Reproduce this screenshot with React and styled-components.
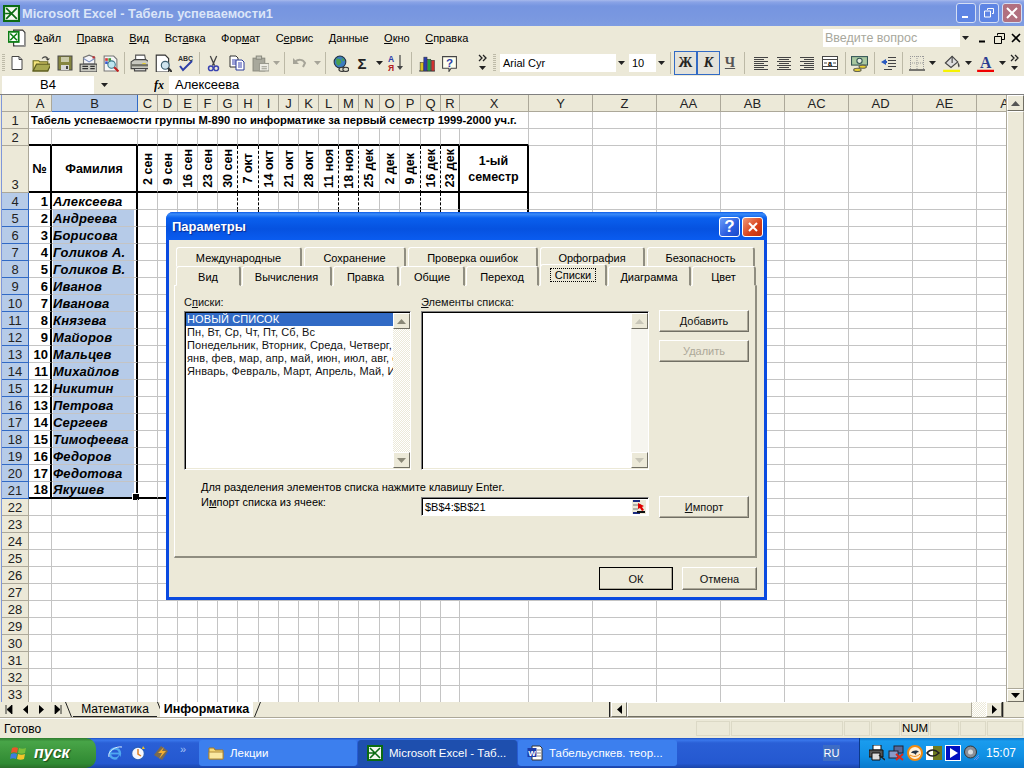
import React from "react";
import styled, { createGlobalStyle } from "styled-components";

const GlobalStyle = createGlobalStyle`
    html, body {
        margin: 0;
        padding: 0;
        width: 1024px;
        height: 768px;
        overflow: hidden;
        background: #ece9d8;
        font-family: "Liberation Sans", Arial, sans-serif;
    }
    * {
        box-sizing: border-box;
    }
`;

const Ico = ({ s = 16, w, h, vb = "0 0 16 16", children }) => (
    <svg width={w || s} height={h || s} viewBox={vb} style={{ display: "block", flex: "none" }}>
        {children}
    </svg>
);

const ExcelLogo = ({ s = 17 }) => (
    <Ico s={s}>
        <rect x="0" y="0" width="16" height="16" fill="#0b6b12" />
        <rect x="2" y="2" width="12" height="12" fill="#f4f8f0" />
        <path d="M3 3l10 10M13 3L3 13M2 8h5" stroke="#0b6b12" strokeWidth="1.6" fill="none" />
    </Ico>
);
const DocExcel = () => (
    <Ico s={18}>
        <path d="M5 1h8l2 2v12H5z" fill="#fff" stroke="#333" />
        <path d="M15 4v11H6" stroke="#999" fill="none" />
        <rect x="0.5" y="2.5" width="9" height="9" fill="#fff" stroke="#0b7d14" strokeWidth="1.6" />
        <path d="M2 4l6 6M8 4l-6 6" stroke="#0b7d14" strokeWidth="1.4" />
    </Ico>
);
const NewIcon = () => (
    <Ico>
        <path d="M3 1.5h7l3 3v10H3z" fill="#fff" stroke="#444" />
        <path d="M10 1.5v3h3" fill="none" stroke="#444" />
    </Ico>
);
const OpenIcon = () => (
    <Ico s={18}>
        <path d="M1 6h5l1 1h7v8H1z" fill="#f2e27a" stroke="#6b6b20" />
        <path d="M1 15l3-6h13l-3 6z" fill="#a8a850" stroke="#5c5c20" />
        <path d="M9 4c1.500-2 4-2 5 0" stroke="#333" fill="none" />
        <path d="M12 4h4l-2 2z" fill="#333" />
    </Ico>
);
const SaveIcon = () => (
    <Ico>
        <rect x="1" y="1" width="14" height="14" fill="#85853f" stroke="#4a4a4a" />
        <rect x="4" y="2" width="8" height="5" fill="#c9c9a8" />
        <rect x="4" y="10" width="8" height="5" fill="#d8d8d8" />
        <rect x="9" y="11" width="2" height="3" fill="#444" />
    </Ico>
);
const MailIcon = () => (
    <Ico s={18}>
        <path d="M4 7V3l5-2 5 2v6H4z" fill="#f4f4f8" stroke="#777" />
        <path d="M4 4l5 3 5-3" stroke="#7a8fc0" fill="none" />
        <rect x="12" y="2" width="2" height="2" fill="#c03030" />
        <rect x="1" y="9" width="15" height="7" fill="#c8c8c0" stroke="#444" />
        <path d="M3 11h5M3 13h5M10 11h4M10 13h4" stroke="#333" />
    </Ico>
);
const FindIcon = () => (
    <Ico s={17}>
        <path d="M2 1h9l3 3v11H2z" fill="#f6f6f6" stroke="#777" />
        <rect x="3" y="3" width="2.500" height="2.500" fill="#d23a3a" />
        <rect x="6" y="3" width="2.500" height="2.500" fill="#3a9a3a" />
        <rect x="3" y="6" width="2.500" height="2.500" fill="#3a5ad0" />
        <rect x="6" y="6" width="2.500" height="2.500" fill="#e6c020" />
        <circle cx="9" cy="9" r="3.500" fill="#bfe6f0" stroke="#3e7b8c" />
        <path d="M11.500 11.500l4 4" stroke="#c02020" strokeWidth="2" />
    </Ico>
);
const PrintIcon = () => (
    <Ico s={18}>
        <path d="M5 1h8l1 5H5z" fill="#fff" stroke="#555" />
        <path d="M1 7l3-2h10l3 2v6H1z" fill="#c8c8c0" stroke="#444" />
        <rect x="1" y="9" width="16" height="2" fill="#6f6f66" />
        <rect x="11" y="8" width="3" height="1" fill="#e8d030" />
        <path d="M4 13h10v2H4z" fill="#fff" stroke="#444" />
    </Ico>
);
const PreviewIcon = () => (
    <Ico s={18}>
        <path d="M2 1h8l3 3v12H2z" fill="#fff" stroke="#333" />
        <circle cx="10" cy="10" r="3.500" fill="#cfe4ee" stroke="#3c5f70" />
        <path d="M12.500 12.500l4 4" stroke="#333" strokeWidth="2" />
    </Ico>
);
const SpellIcon = () => (
    <Ico s={18} vb="0 0 18 18">
        <text x="1" y="7" fontSize="7" fontWeight="700" fill="#333" fontFamily="Liberation Sans">ABC</text>
        <path d="M3 12l3 4 9-9" stroke="#2e3fa8" strokeWidth="2" fill="none" />
    </Ico>
);
const CutIcon = () => (
    <Ico s={17}>
        <path d="M5 1l4 9M11 1L7 10" stroke="#444" strokeWidth="1.200" />
        <circle cx="5.500" cy="12.500" r="2.200" fill="none" stroke="#3842b0" strokeWidth="1.400" />
        <circle cx="10.500" cy="12.500" r="2.200" fill="none" stroke="#3842b0" strokeWidth="1.400" />
    </Ico>
);
const CopyIcon = () => (
    <Ico>
        <path d="M1 1h6l2 2v9H1z" fill="#fff" stroke="#333" />
        <path d="M3 5h4M3 7h4M3 9h4" stroke="#3842b0" />
        <path d="M7 5h6l2 2v8H7z" fill="#fff" stroke="#2a3a98" />
        <path d="M9 8h4M9 10h4M9 12h4" stroke="#3842b0" />
    </Ico>
);
const PasteIcon = () => (
    <Ico s={17}>
        <rect x="1" y="3" width="11" height="12" fill="#a8a89c" stroke="#8c8c80" />
        <rect x="4" y="1" width="5" height="3" fill="#c4c4b8" stroke="#8c8c80" />
        <rect x="7" y="8" width="9" height="7" fill="#efeee6" stroke="#9a9a8e" />
        <path d="M9 11h5M9 13h5" stroke="#9a9a8e" />
    </Ico>
);
const UndoIcon = () => (
    <Ico>
        <path d="M3 7c3-3 8-3 10 1l-2 4" fill="none" stroke="#a6a498" strokeWidth="2" />
        <path d="M1 3v6h6z" fill="#a6a498" />
    </Ico>
);
const WebIcon = () => (
    <Ico s={17}>
        <circle cx="7.500" cy="6.500" r="5.500" fill="#3a7cc0" stroke="#234" />
        <path d="M4 3l4 1 1 3-3 3-2-2zM9 2l3 3-2 1z" fill="#4aa050" />
        <ellipse cx="9.500" cy="13.500" rx="3" ry="2" fill="#d8d8c8" stroke="#333" />
        <ellipse cx="13" cy="13.500" rx="2.800" ry="2" fill="#d8d8c8" stroke="#333" />
    </Ico>
);
const SortIcon = () => (
    <Ico s={18} vb="0 0 18 18">
        <text x="1" y="8" fontSize="8.500" fontWeight="700" fill="#2e3fa8" fontFamily="Liberation Sans">А</text>
        <text x="1" y="16.500" fontSize="8.500" fontWeight="700" fill="#b02020" fontFamily="Liberation Sans">Я</text>
        <path d="M13 1v12" stroke="#444" strokeWidth="1.200" />
        <path d="M10 12h6l-3 4z" fill="#444" />
    </Ico>
);
const ChartIcon = () => (
    <Ico s={17}>
        <path d="M1 15h15" stroke="#444" />
        <rect x="2" y="7" width="3" height="8" fill="#d8c020" stroke="#333" strokeWidth=".5" />
        <rect x="5.500" y="2" width="3" height="13" fill="#2c3cb0" stroke="#333" strokeWidth=".5" />
        <rect x="9" y="4" width="3" height="11" fill="#20a040" stroke="#333" strokeWidth=".5" />
        <rect x="12.500" y="5" width="3" height="10" fill="#d03030" stroke="#333" strokeWidth=".5" />
    </Ico>
);
const HelpIcon = () => (
    <Ico s={17}>
        <path d="M1.500 1.500h13v11h-5l-2 3v-3h-6z" fill="#fffff0" stroke="#444" />
        <text x="8" y="11" fontSize="11" fontWeight="700" fill="#2e3fa8" textAnchor="middle" fontFamily="Liberation Sans">?</text>
    </Ico>
);
const Chevrons = () => (
    <Ico w={12} h={18} vb="0 0 12 18">
        <path d="M2 1l3 3-3 3M6 1l3 3-3 3" stroke="#222" fill="none" strokeWidth="1.300" />
        <path d="M2 12h7l-3.500 4z" fill="#222" />
    </Ico>
);
const DropArrow = ({ color = "#222" }) => (
    <Ico w={7} h={4} vb="0 0 7 4">
        <path d="M0 0h7L3.500 4z" fill={color} />
    </Ico>
);
const AlignIcon = ({ kind }) => {
    const longX = 1;
    const short = { left: [1, 11], center: [3, 13], right: [5, 15] }[kind];
    return (
        <Ico>
            {[2, 6, 10, 14].map((y) => (
                <path key={y} d={`M${longX} ${y}.5h14`} stroke="#444" />
            ))}
            {[4, 8, 12].map((y) => (
                <path key={y} d={`M${short[0]} ${y}.5H${short[1]}`} stroke="#444" />
            ))}
        </Ico>
    );
};
const MergeIcon = () => (
    <Ico>
        <rect x="0.500" y="1.500" width="15" height="13" fill="#fff" stroke="#444" />
        <path d="M0 4.500h16M0 11.500h16" stroke="#444" />
        <path d="M2 8h3M14 8h-3" stroke="#444" />
        <text x="8" y="10.500" fontSize="7" fontWeight="700" textAnchor="middle" fontFamily="Liberation Sans">a</text>
    </Ico>
);
const MoneyIcon = () => (
    <Ico s={17}>
        <rect x="0.500" y="1.500" width="15" height="8" fill="#a8c8a0" stroke="#355" />
        <circle cx="8" cy="5.500" r="2.500" fill="#e6efe0" stroke="#355" />
        <ellipse cx="11" cy="11" rx="3.500" ry="1.500" fill="#e8d030" stroke="#665" />
        <ellipse cx="6" cy="14" rx="3.500" ry="1.500" fill="#e8d030" stroke="#665" />
    </Ico>
);
const IndentIcon = () => (
    <Ico>
        <path d="M7 2.500h8M7 5.500h8M7 8.500h8M7 11.500h8M3 14.500h8" stroke="#444" />
        <path d="M0 7l5-3v2h1v2H5v2z" fill="#2a5ac0" />
    </Ico>
);
const BordersIcon = () => (
    <Ico>
        <path d="M1 1.500h14M1 8h14M1.500 1v14M8 1v14M14.500 1v14" stroke="#999" strokeDasharray="1 1" />
        <path d="M0 15h16" stroke="#444" strokeWidth="1.400" />
    </Ico>
);
const FillIcon = () => (
    <Ico s={18}>
        <path d="M3 8l6-6 5 5-6 5z" fill="#ddd" stroke="#444" />
        <path d="M9 2v6" stroke="#444" />
        <path d="M14 7c2 2 2 4 1 5-1-1-1-3-1-5z" fill="#444" />
        <rect x="1" y="14" width="16" height="4" fill="#f6f200" />
    </Ico>
);
const FontColorIcon = () => (
    <Ico s={18}>
        <text x="8.500" y="12" fontSize="14" fontWeight="700" fill="#2c3c90" textAnchor="middle" fontFamily="Liberation Serif">A</text>
        <rect x="1" y="14" width="16" height="4" fill="#f00000" />
    </Ico>
);
const FxIcon = () => (
    <Ico w={14} h={14} vb="0 0 14 14">
        <text x="0" y="11" fontSize="12" fontStyle="italic" fontWeight="700" fontFamily="Liberation Serif">fx</text>
    </Ico>
);

const RefEditIcon = () => (
    <Ico>
        <rect x="1" y="1" width="14" height="14" fill="#ece9d8" />
        <path d="M2 2h7M2 14h7" stroke="#1a2a80" strokeWidth="2" />
        <path d="M2 6h8M2 10h5" stroke="#777" />
        <path d="M7 4l6 3-2 1 2 3-2 1-2-3-2 1z" fill="#e00000" />
        <rect x="6" y="12" width="8" height="2" fill="#111" />
    </Ico>
);

const WinFlag = () => (
    <Ico s={18} vb="0 0 18 18">
        <path d="M2 4c2-1 4-1 6 0l-1 5c-2-1-4-1-6 0z" fill="#e8562a" />
        <path d="M9 4c2 1 5 1 7 0l-1 5c-2 1-5 1-7 0z" fill="#7bbf3a" />
        <path d="M1 10c2-1 4-1 6 0l-1 5c-2-1-4-1-6 0z" fill="#3c7ce0" />
        <path d="M8 10c2 1 5 1 7 0l-1 5c-2 1-5 1-7 0z" fill="#f4c52a" />
    </Ico>
);
const IeIcon = () => (
    <Ico>
        <circle cx="8" cy="8.500" r="5" fill="none" stroke="#4fa8f0" strokeWidth="2.400" />
        <path d="M3.500 8.500h9" stroke="#4fa8f0" strokeWidth="1.800" />
        <path d="M13 10l-3 4h3z" fill="#2458d0" />
        <path d="M2 12C0 6 9 1 15 2" stroke="#d8ecff" fill="none" />
    </Ico>
);
const OutlookIcon = () => (
    <Ico>
        <circle cx="8" cy="8.500" r="6.500" fill="#f4f8ff" stroke="#2a60c0" strokeWidth="1.500" />
        <path d="M8 4v5l3 2" stroke="#e08020" strokeWidth="1.500" fill="none" />
        <path d="M13 1l2 3h-3z" fill="#f0c020" />
    </Ico>
);
const BoltIcon = () => (
    <Ico>
        <path d="M8 1l7 5-6 9-8-5z" fill="#7a6a50" />
        <path d="M11 2L5 8h4l-3 6 7-8H9z" fill="#f6b030" />
    </Ico>
);
const FolderIcon = () => (
    <Ico>
        <path d="M1 3h5l1 2h8v9H1z" fill="#f6d878" stroke="#a07828" />
        <path d="M1 7h14v7H1z" fill="#fbe7a0" stroke="#b08a38" />
    </Ico>
);
const WordIcon = () => (
    <Ico>
        <path d="M5 1h8l2 2v12H5z" fill="#fff" stroke="#333" />
        <path d="M10 5h4M10 8h4M10 11h4" stroke="#888" />
        <rect x="0.500" y="3" width="9" height="9" fill="#1a3aa8" />
        <text x="5" y="10.500" fontSize="8" fontWeight="700" fill="#fff" textAnchor="middle" fontFamily="Liberation Sans">W</text>
    </Ico>
);
const TrayPrinter = () => (
    <Ico>
        <path d="M4 0h8v5H4z" fill="#fff" stroke="#111" />
        <path d="M0 5h14v7H0z" fill="#555" stroke="#111" />
        <path d="M3 8h8v7H3z" fill="#ddd" stroke="#111" />
        <path d="M10 10l6 5" stroke="#222" strokeWidth="1.500" />
    </Ico>
);
const TrayNet = () => (
    <Ico>
        <rect x="6" y="1" width="9" height="7" fill="#5a6a98" stroke="#223" />
        <rect x="1" y="6" width="9" height="7" fill="#8a9ac8" stroke="#223" />
        <path d="M8 9l7 6M15 9l-7 6" stroke="#e02818" strokeWidth="2" />
    </Ico>
);
const TrayCircle = () => (
    <Ico>
        <circle cx="8" cy="8" r="7" fill="#fff0d8" stroke="#f08a10" strokeWidth="2" />
        <path d="M4 8c2-3 6-3 8-1-2 0-3 1-3 3-2-2-3-2-5-2z" fill="#234" />
        <path d="M3 10c3 2 7 2 10-1" stroke="#f08a10" fill="none" />
    </Ico>
);
const TrayNvidia = () => (
    <Ico>
        <rect x="0" y="1" width="16" height="14" fill="#fff" />
        <rect x="7" y="1" width="9" height="14" fill="#6e7a20" />
        <path d="M1 8c3-4 8-4 12 0-4 4-9 4-12 0z" fill="none" stroke="#222" strokeWidth="1.500" />
    </Ico>
);
const TrayPlay = () => (
    <Ico>
        <rect x="0.500" y="0.500" width="15" height="15" fill="#0010c0" stroke="#fff" />
        <path d="M5 3l8 5-8 5z" fill="#fff" />
    </Ico>
);
const TraySpeaker = () => (
    <Ico>
        <circle cx="6.500" cy="7" r="6" fill="#8a8f98" stroke="#333" />
        <circle cx="6.500" cy="7" r="2.500" fill="#d8dce0" />
        <path d="M10 15l5-5M12 15l3-3" stroke="#6f8fe8" />
    </Ico>
);

const App = styled.div`
    position: relative;
    width: 1024px;
    height: 768px;
    display: flex;
    flex-direction: column;
    overflow: hidden;
    background: #ece9d8;
    color: #000;
    font-size: 11px;
`;

const TitleBar = styled.div`
    height: 26px;
    display: flex;
    align-items: center;
    padding: 0 2px 0 3px;
    background: linear-gradient(#a7b9ec 0, #8aa3e6 2px, #7695e0 6px, #7a98e0 70%, #7e9ce2 100%);
    color: #dbe5f8;
`;

const TitleText = styled.div`
    flex: 1;
    margin-left: 2px;
    font-size: 12.8px;
    font-weight: 700;
`;

const CaptionButton = styled.div`
    width: 20px;
    height: 20px;
    margin-left: 3px;
    border: 1px solid #d4def4;
    border-radius: 3px;
    background: ${({ $close }) => ($close ? "#b1707f" : "#5e85e4")};
    display: flex;
    align-items: center;
    justify-content: center;
`;

const MenuBar = styled.div`
    height: 24px;
    display: flex;
    align-items: center;
    padding-left: 8px;
    font-size: 11px;
`;

const MenuItem = styled.div`
    margin-left: ${({ $first }) => ($first ? "8px" : "15.5px")};
    white-space: nowrap;
`;

const AskBox = styled.div`
    width: 148px;
    height: 18px;
    margin-left: auto;
    background: #fff;
    color: #a8a89c;
    display: flex;
    align-items: center;
    padding-left: 2px;
    justify-content: space-between;
    font-size: 12.5px;
`;

const ComboArrow = styled.div`
    width: ${({ $w }) => $w || 11}px;
    align-self: stretch;
    background: #ece9d8;
    display: flex;
    align-items: center;
    justify-content: center;
`;

const DocButtons = styled.div`
    width: 53px;
    display: flex;
    align-items: center;
    justify-content: space-around;
    padding-left: 4px;
`;

const ToolBar = styled.div`
    height: 26px;
    display: flex;
    align-items: center;
    padding-left: 2px;
`;

const Grip = styled.div`
    width: 3px;
    height: 18px;
    flex: none;
    margin-right: 1px;
    background: repeating-linear-gradient(#bdbaa8 0 1px, transparent 1px 2px);
`;

const Tool = styled.div`
    width: ${({ $w }) => $w}px;
    height: 24px;
    flex: none;
    display: flex;
    align-items: center;
    justify-content: center;
    font-family: ${({ $serif }) => ($serif ? '"Liberation Serif", serif' : "inherit")};
    ${({ $on }) => $on && "border: 1px solid #316ac5; background: #e3e2da;"}
`;

const LetterMark = styled.span`
    font-size: ${({ $size }) => $size || 14}px;
    font-weight: 700;
    font-style: ${({ $italic }) => ($italic ? "italic" : "normal")};
    text-decoration: ${({ $under }) => ($under ? "underline" : "none")};
    color: ${({ $color }) => $color || "#222"};
`;

const ToolSep = styled.div`
    width: ${({ $w }) => $w || 4}px;
    height: 22px;
    flex: none;
    display: flex;
    justify-content: center;
    &::after {
        content: "";
        width: 1px;
        background: #bcb9a6;
    }
`;

const Combo = styled.div`
    width: ${({ $w }) => $w}px;
    height: 18px;
    margin-left: ${({ $ml }) => $ml || 0}px;
    flex: none;
    background: #fff;
    display: flex;
    align-items: center;
    justify-content: space-between;
    padding-left: 3px;
    font-size: 11px;
`;

const FormulaBar = styled.div`
    height: 19px;
    display: flex;
    border-bottom: 1px solid #808080;
    font-size: 13px;
`;

const NameBox = styled.div`
    width: 92px;
    margin-left: 2px;
    background: #fff;
    text-align: center;
    line-height: 17px;
`;

const NameDrop = styled.div`
    width: 20px;
    display: flex;
    align-items: center;
    justify-content: center;
`;

const FxCell = styled.div`
    width: 55px;
    display: flex;
    align-items: center;
    justify-content: flex-end;
    padding-right: 1px;
`;

const FormulaInput = styled.div`
    flex: 1;
    background: #fff;
    padding-left: 6px;
    line-height: 17px;
`;

const SheetArea = styled.div`
    height: 607px;
    display: flex;
    padding-left: 1px;
`;

const SheetClip = styled.div`
    width: 1005px;
    overflow: hidden;
    border-left: 1px solid #7f97da;
`;

const Sheet = styled.div`
    display: grid;
    width: 1040px;
    grid-template-columns: ${({ $cols }) => $cols};
    grid-template-rows: 17px 17px 17px 47px repeat(31, 17px);
    background: #fff;
    font-size: 13px;
`;

const HeadCell = styled.div`
    background: ${({ $sel }) => ($sel ? "#b6cbe8" : "#ece9d8")};
    border-right: 1px solid ${({ $sel }) => ($sel ? "#316ac5" : "#aca899")};
    border-bottom: 1px solid ${({ $sel }) => ($sel ? "#316ac5" : "#aca899")};
    display: flex;
    justify-content: center;
    align-items: ${({ $end }) => ($end ? "flex-end" : "center")};
    color: #222;
    font-size: 13px;
    overflow: hidden;
`;

const borderOf = (v) =>
    v === "thick" ? "2px solid #000" : v === "dash" ? "1px dashed #000" : "1px solid #c4c4c4";

const Cell = styled.div`
    position: relative;
    display: flex;
    align-items: center;
    min-width: 0;
    font-weight: 700;
    white-space: nowrap;
    border-right: ${({ $r }) => borderOf($r)};
    border-bottom: ${({ $b }) => borderOf($b)};
    justify-content: ${({ $align }) => $align || "flex-start"};
    grid-column: ${({ $span }) => ($span ? `span ${$span}` : "auto")};
    ${({ $pr }) => $pr && `padding-right: ${$pr}px;`}
`;

const Title = styled(Cell)`
    font-size: 11.2px;
    padding-left: 2px;
`;

const NameCell = styled(Cell)`
    font-style: italic;
    padding: 0 2px 0 1px;
    background: ${({ $sel }) => ($sel ? "#b6cbe8" : "#fff")};
    background-clip: content-box;
    letter-spacing: 0.2px;
    ${({ $handle }) =>
        $handle &&
        `&::after {
            content: "";
            position: absolute;
            right: -4px;
            bottom: -4px;
            width: 6px;
            height: 6px;
            background: #000;
            border: 1px solid #fff;
        }`}
`;

const VerticalLabel = styled.span`
    writing-mode: vertical-rl;
    transform: rotate(180deg);
    font-size: 12.5px;
`;

const CenterLabel = styled.span`
    text-align: center;
    line-height: 16px;
    font-size: 12.5px;
    white-space: normal;
`;

const VScroll = styled.div`
    width: 18px;
    display: flex;
    flex-direction: column;
    background: #ece9d8;
    border-left: 1px solid #aca899;
`;

const ScrollButton = styled.div`
    width: ${({ $w }) => $w || 17}px;
    height: ${({ $h }) => $h || 15}px;
    flex: none;
    background: #ece9d8;
    border: 1px solid;
    border-color: #fff #716f64 #716f64 #fff;
    display: flex;
    align-items: center;
    justify-content: center;
`;

const ScrollThumb = styled.div`
    flex: 1;
    background: #ece9d8;
    border: 1px solid;
    border-color: #fff #aca899 #aca899 #fff;
`;

const SheetBar = styled.div`
    height: 16px;
    display: flex;
    align-items: stretch;
    border-bottom: 1px solid #aca899;
`;

const NavArrows = styled.div`
    width: 65px;
    padding: 0 3px 0 5px;
    display: flex;
    align-items: center;
    justify-content: space-between;
`;

const SheetTab = styled.div`
    display: flex;
    align-items: stretch;
    flex: none;
    margin-left: ${({ $ml }) => $ml || 0}px;
`;

const SheetTabText = styled.div`
    width: ${({ $w }) => $w}px;
    text-align: center;
    font-size: ${({ $on }) => ($on ? 12.5 : 12)}px;
    font-weight: ${({ $on }) => ($on ? 700 : 400)};
    background: ${({ $on }) => ($on ? "#fff" : "transparent")};
    line-height: 15px;
    border-bottom: 1px solid ${({ $on }) => ($on ? "#fff" : "#222")};
`;

const HScroll = styled.div`
    margin-left: auto;
    display: flex;
    align-items: stretch;
    width: 415px;
`;

const SplitBar = styled.div`
    width: 2px;
    border-left: 1px solid #222;
    border-right: 1px solid #aca899;
`;

const HThumb = styled.div`
    flex: 1;
    border: 1px solid;
    border-color: #fff #aca899 #716f64 #fff;
`;

const Hatch = styled.div`
    width: ${({ $w }) => $w || 14}px;
    flex: ${({ $grow }) => ($grow ? 1 : "none")};
    background: repeating-conic-gradient(#ece9d8 0 25%, #fff 0 50%) 0 0 / 2px 2px;
`;

const StatusBar = styled.div`
    height: 20px;
    display: flex;
    align-items: center;
    border-top: 1px solid #fff;
    padding-left: 4px;
    font-size: 12px;
`;

const StatusText = styled.div`
    flex: 1;
`;

const StatusPanel = styled.div`
    width: ${({ $w }) => $w}px;
    height: 15px;
    margin-right: 1px;
    border: 1px solid #dcd9c6;
    font-size: 11.5px;
    text-align: center;
    line-height: 13px;
`;

const TaskBar = styled.div`
    height: 30px;
    display: flex;
    align-items: stretch;
    background: linear-gradient(#1c4fc4 0, #3a78ec 2px, #2a5fd6 5px, #2458d0 85%, #1a44a8 100%);
    color: #fff;
    font-size: 12px;
`;

const StartButton = styled.div`
    width: 96px;
    display: flex;
    align-items: center;
    gap: 6px;
    padding-left: 10px;
    border-radius: 0 10px 10px 0;
    background: linear-gradient(#2f7d2f 0, #48a548 12%, #3c963c 50%, #2f8a33 85%, #2a6f2a 100%);
    font-size: 16px;
    font-weight: 700;
    font-style: italic;
    text-shadow: 1px 1px 1px #1a4a1a;
`;

const QuickLaunch = styled.div`
    width: 102px;
    display: flex;
    align-items: center;
    gap: 7px;
    padding-left: 11px;
`;

const QuickMore = styled.div`
    width: 16px;
    margin-top: -8px;
    color: #a8c4f4;
    font-size: 11px;
    padding-left: 4px;
`;

const TaskButton = styled.div`
    width: ${({ $w }) => $w}px;
    margin: 2px 0 2px 1px;
    display: flex;
    align-items: center;
    gap: 6px;
    padding-left: 9px;
    border-radius: 3px;
    white-space: nowrap;
    font-size: 11.5px;
    background: ${({ $on }) => ($on ? "#1e4fae" : "#3c7fee")};
`;

const LangBox = styled.div`
    width: 17px;
    height: 16px;
    margin: 7px 19px 0 auto;
    background: #3d6cc4;
    text-align: center;
    line-height: 16px;
    font-size: 11px;
`;

const Tray = styled.div`
    width: 165px;
    display: flex;
    align-items: center;
    gap: 3px;
    padding-left: 9px;
    background: linear-gradient(#0c72c8 0, #1a9cee 3px, #1090e4 60%, #0a78cc 100%);
    border-left: 1px solid #0a3a8a;
`;

const Clock = styled.div`
    margin-left: 3px;
    font-size: 12px;
`;

const Dialog = styled.div`
    position: absolute;
    left: 166px;
    top: 212px;
    width: 601px;
    height: 388px;
    display: flex;
    flex-direction: column;
    border-radius: 7px 7px 0 0;
    background: #0a4ae0;
    padding: 0 3px 3px;
    overflow: hidden;
`;

const DialogTitle = styled.div`
    height: 28px;
    margin: 0 -3px;
    display: flex;
    align-items: center;
    padding: 1px 4px 0 6px;
    background: linear-gradient(#0a5ae8 0, #3c8cf8 2px, #0a60ee 6px, #0652e0 60%, #0a5cf0 100%);
    color: #fff;
`;

const DialogCaption = styled.div`
    flex: 1;
    font-size: 13px;
    font-weight: 700;
    text-shadow: 1px 1px 1px #0a2a90;
`;

const DialogHelp = styled.div`
    width: 21px;
    height: 20px;
    margin-left: 2px;
    border: 1px solid #fff;
    border-radius: 3px;
    background: ${({ $close }) =>
        $close ? "linear-gradient(135deg,#f09878,#d84018 60%,#c03010)" : "linear-gradient(135deg,#6a9cf8,#2a5ce0 60%,#1a48c8)"};
    display: flex;
    align-items: center;
    justify-content: center;
    font-size: 17px;
    font-weight: 700;
`;

const DialogBody = styled.div`
    flex: 1;
    background: #ece9d8;
    padding: 7px 7px 0 5px;
    display: flex;
    flex-direction: column;
`;

const TabRow = styled.div`
    display: flex;
    height: 19px;
    gap: ${({ $gap }) => $gap}px;
    padding-left: 2px;
    position: relative;
    z-index: ${({ $front }) => ($front ? 2 : 1)};
`;

const Tab = styled.div`
    width: ${({ $w }) => $w}px;
    flex: none;
    height: ${({ $on }) => ($on ? 22 : 20)}px;
    margin-top: ${({ $on }) => ($on ? -2 : 0)}px;
    background: #ece9d8;
    border: 1px solid;
    border-color: #fff #8f8d80 transparent #fff;
    border-right-width: 2px;
    border-radius: 3px 3px 0 0;
    text-align: center;
    line-height: 20px;
    font-size: 11px;
    position: relative;
`;

const FocusMark = styled.span`
    border: 1px dotted #000;
    padding: 0 4px;
`;

const Page = styled.div`
    height: 273px;
    border: 1px solid;
    border-color: #fff #8f8d80 #8f8d80 #fff;
    border-right-width: 2px;
    border-bottom-width: 2px;
    padding: 10px 7px 0 9px;
    display: grid;
    grid-template-columns: 227px 228px 90px;
    column-gap: 10px;
    grid-template-rows: 15px 159px 26px 22px;
    font-size: 11px;
`;

const FieldLabel = styled.div`
    line-height: 13px;
    color: #111;
`;

const ListBox = styled.div`
    display: flex;
    background: #fff;
    border: 1px solid;
    border-color: #808080 #fff #fff #808080;
    box-shadow: inset 1px 1px #000, inset -1px -1px #ece9d8;
    padding: 1px 0 1px 1px;
`;

const ListItems = styled.div`
    flex: 1;
    min-width: 0;
    overflow: hidden;
`;

const ListRow = styled.div`
    height: 13px;
    line-height: 13px;
    padding-left: 1px;
    white-space: nowrap;
    overflow: hidden;
    letter-spacing: 0.1px;
    color: ${({ $sel }) => ($sel ? "#fff" : "#111")};
    background: ${({ $sel }) => ($sel ? "#316ac5" : "transparent")};
`;

const ListScroll = styled.div`
    width: 17px;
    display: flex;
    flex-direction: column;
    justify-content: space-between;
    flex: none;
    background: ${({ $off }) =>
        $off ? "#f6f5ef" : "repeating-conic-gradient(#ece9d8 0 25%, #fff 0 50%) 0 0 / 2px 2px"};
`;

const SideButtons = styled.div`
    display: flex;
    flex-direction: column;
    gap: 8px;
    margin-top: -1px;
`;

const Button = styled.div`
    width: ${({ $w }) => $w || 90}px;
    height: ${({ $h }) => $h || 22}px;
    flex: none;
    background: #ece9d8;
    border: 1px solid;
    border-color: #fff #716f64 #716f64 #fff;
    box-shadow: inset -1px -1px #aca899;
    display: flex;
    align-items: center;
    justify-content: center;
    font-size: 11px;
    color: ${({ $off }) => ($off ? "#aca899" : "#111")};
    ${({ $def }) => $def && "outline: 1px solid #000; outline-offset: -1px;"}
`;

const HintLine = styled.div`
    grid-column: 1 / span 3;
    padding: 10px 0 0 17px;
    line-height: 14px;
`;

const ImportLabel = styled.div`
    padding-left: 17px;
    line-height: 13px;
`;

const RefInput = styled.div`
    height: 19px;
    margin-top: 1px;
    background: #fff;
    border: 1px solid;
    border-color: #808080 #fff #fff #808080;
    box-shadow: inset 1px 1px #000;
    display: flex;
    align-items: center;
    justify-content: space-between;
    padding: 0 1px 0 3px;
`;

const DialogFooter = styled.div`
    display: flex;
    justify-content: flex-end;
    gap: 9px;
    margin-top: 9px;
`;

const Arrow = ({ dir, color = "#000" }) => {
    const d = {
        up: "M0 5L4.500 0 9 5z",
        down: "M0 0h9L4.500 5z",
        left: "M5 0v9L0 4.500z",
        right: "M0 0v9l5-4.500z",
    }[dir];
    const horizontal = dir === "left" || dir === "right";
    return (
        <Ico w={horizontal ? 5 : 9} h={horizontal ? 9 : 5} vb={horizontal ? "0 0 5 9" : "0 0 9 5"}>
            <path d={d} fill={color} />
        </Ico>
    );
};

const menuItems = [
    ["Ф", "айл"],
    ["П", "равка"],
    ["В", "ид"],
    ["Вст", "а", "вка"],
    ["Фор", "м", "ат"],
    ["С", "е", "рвис"],
    ["Д", "анные"],
    ["О", "кно"],
    ["С", "правка"],
];

const renderMenuLabel = (parts) =>
    parts.length === 2 ? (
        <>
            <u>{parts[0]}</u>
            {parts[1]}
        </>
    ) : (
        <>
            {parts[0]}
            <u>{parts[1]}</u>
            {parts[2]}
        </>
    );

const columns = [
    ["A", 23], ["B", 86], ["C", 20], ["D", 20], ["E", 20], ["F", 20], ["G", 20], ["H", 21],
    ["I", 20], ["J", 20], ["K", 20], ["L", 20], ["M", 20], ["N", 21], ["O", 20], ["P", 21],
    ["Q", 20], ["R", 19], ["X", 69], ["Y", 64], ["Z", 64], ["AA", 64], ["AB", 64], ["AC", 64],
    ["AD", 64], ["AE", 64], ["AF", 64],
];

const gridCols = `27px ${columns.map((c) => `${c[1]}px`).join(" ")}`;

const dates = [
    "2 сен", "9 сен", "16 сен", "23 сен", "30 сен", "7 окт", "14 окт", "21 окт",
    "28 окт", "11 ноя", "18 ноя", "25 дек", "2 дек", "9 дек", "16 дек", "23 дек",
];

const students = [
    "Алексеева", "Андреева", "Борисова", "Голиков А.", "Голиков В.", "Иванов",
    "Иванова", "Князева", "Майоров", "Мальцев", "Михайлов", "Никитин",
    "Петрова", "Сергеев", "Тимофеева", "Федоров", "Федотова", "Якушев",
];

// right-hand border of the date columns: H, M and Q are framed by dashes
const dashRight = [4, 5, 9, 10, 13, 14];
const dateBorder = (i) => (i === 15 ? "thick" : dashRight.includes(i) ? "dash" : undefined);

const lists = [
    "НОВЫЙ СПИСОК",
    "Пн, Вт, Ср, Чт, Пт, Сб, Вс",
    "Понедельник, Вторник, Среда, Четверг, Пятница",
    "янв, фев, мар, апр, май, июн, июл, авг, сен",
    "Январь, Февраль, Март, Апрель, Май, Июнь",
];

const backTabs = [
    ["Международные", 126],
    ["Сохранение", 102],
    ["Проверка ошибок", 130],
    ["Орфография", 105],
    ["Безопасность", 108],
];

const frontTabs = [
    ["Вид", 65],
    ["Вычисления", 90],
    ["Правка", 66],
    ["Общие", 65],
    ["Переход", 73],
    ["Списки", 67],
    ["Диаграмма", 83],
    ["Цвет", 64],
];

const Toolbar = () => (
    <ToolBar>
        <Grip />
        <Tool $w={22}><NewIcon /></Tool>
        <Tool $w={25}><OpenIcon /></Tool>
        <Tool $w={23}><SaveIcon /></Tool>
        <Tool $w={23}><MailIcon /></Tool>
        <Tool $w={23}><FindIcon /></Tool>
        <ToolSep />
        <Tool $w={25}><PrintIcon /></Tool>
        <Tool $w={23}><PreviewIcon /></Tool>
        <Tool $w={23}><SpellIcon /></Tool>
        <ToolSep />
        <Tool $w={24}><CutIcon /></Tool>
        <Tool $w={24}><CopyIcon /></Tool>
        <Tool $w={22}><PasteIcon /></Tool>
        <Tool $w={11}><DropArrow color="#a6a498" /></Tool>
        <ToolSep />
        <Tool $w={27}><UndoIcon /></Tool>
        <Tool $w={8}><DropArrow color="#a6a498" /></Tool>
        <ToolSep $w={8} />
        <Tool $w={22}><WebIcon /></Tool>
        <Tool $w={22}><LetterMark $size={15}>Σ</LetterMark></Tool>
        <Tool $w={12}><DropArrow /></Tool>
        <Tool $w={22}><SortIcon /></Tool>
        <ToolSep $w={8} />
        <Tool $w={22}><ChartIcon /></Tool>
        <Tool $w={24}><HelpIcon /></Tool>
        <Tool $w={12} />
        <Tool $w={20}><Chevrons /></Tool>
        <Grip />
        <Tool $w={3} />
        <Combo $w={127}>
            Arial Cyr
            <ComboArrow><DropArrow /></ComboArrow>
        </Combo>
        <Combo $w={38} $ml={2}>
            10
            <ComboArrow><DropArrow /></ComboArrow>
        </Combo>
        <ToolSep $w={7} />
        <Tool $w={23} $on $serif><LetterMark>Ж</LetterMark></Tool>
        <Tool $w={23} $on $serif><LetterMark $italic>К</LetterMark></Tool>
        <Tool $w={20} $serif><LetterMark $under $color="#555">Ч</LetterMark></Tool>
        <ToolSep $w={9} />
        <Tool $w={23}><AlignIcon kind="left" /></Tool>
        <Tool $w={23}><AlignIcon kind="center" /></Tool>
        <Tool $w={23}><AlignIcon kind="right" /></Tool>
        <Tool $w={24}><MergeIcon /></Tool>
        <ToolSep $w={6} />
        <Tool $w={22}><MoneyIcon /></Tool>
        <ToolSep $w={8} />
        <Tool $w={22}><IndentIcon /></Tool>
        <ToolSep $w={5} />
        <Tool $w={23}><BordersIcon /></Tool>
        <Tool $w={9}><DropArrow /></Tool>
        <Tool $w={27}><FillIcon /></Tool>
        <Tool $w={8}><DropArrow /></Tool>
        <Tool $w={26}><FontColorIcon /></Tool>
        <Tool $w={8}><DropArrow /></Tool>
        <Tool $w={18}><Chevrons /></Tool>
    </ToolBar>
);

const SheetGrid = () => (
    <Sheet $cols={gridCols}>
        <HeadCell />
        {columns.map(([name]) => (
            <HeadCell key={name} $sel={name === "B"}>{name}</HeadCell>
        ))}

        <HeadCell>1</HeadCell>
        <Title $span={19}>
            Табель успеваемости группы М-890 по информатике за первый семестр 1999-2000 уч.г.
        </Title>
        {columns.slice(19).map(([name]) => <Cell key={name} />)}

        <HeadCell>2</HeadCell>
        {columns.map(([name], i) => (
            <Cell key={name} $b={i < 19 ? "thick" : undefined} />
        ))}

        <HeadCell $end>3</HeadCell>
        <Cell $align="center" $r="thick" $b="thick">№</Cell>
        <Cell $align="center" $r="thick" $b="thick"><CenterLabel>Фамилия</CenterLabel></Cell>
        {dates.map((d, i) => (
            <Cell key={d} $align="center" $b="thick" $r={dateBorder(i)}>
                <VerticalLabel>{d}</VerticalLabel>
            </Cell>
        ))}
        <Cell $align="center" $b="thick" $r="thick">
            <CenterLabel>1-ый семестр</CenterLabel>
        </Cell>
        {columns.slice(19).map(([name]) => <Cell key={name} />)}

        {students.map((name, i) => {
            const last = i === students.length - 1;
            const bottom = last ? "thick" : undefined;
            return (
                <React.Fragment key={name}>
                    <HeadCell $sel>{i + 4}</HeadCell>
                    <Cell $align="flex-end" $pr={2} $r="thick" $b={bottom}>{i + 1}</Cell>
                    <NameCell $sel={i > 0} $handle={last} $r="thick" $b={bottom}>{name}</NameCell>
                    {dates.map((d, j) => <Cell key={d} $r={dateBorder(j)} $b={bottom} />)}
                    <Cell $r="thick" $b={bottom} />
                    {columns.slice(19).map(([col]) => <Cell key={col} />)}
                </React.Fragment>
            );
        })}

        {Array.from({ length: 12 }, (_, i) => (
            <React.Fragment key={i}>
                <HeadCell>{i + 22}</HeadCell>
                {columns.map(([col]) => <Cell key={col} />)}
            </React.Fragment>
        ))}
    </Sheet>
);

const OptionsDialog = () => (
    <Dialog>
        <DialogTitle>
            <DialogCaption>Параметры</DialogCaption>
            <DialogHelp>?</DialogHelp>
            <DialogHelp $close>
                <Ico s={12} vb="0 0 12 12">
                    <path d="M2 2l8 8M10 2l-8 8" stroke="#fff" strokeWidth="2" />
                </Ico>
            </DialogHelp>
        </DialogTitle>
        <DialogBody>
            <TabRow $gap={2}>
                {backTabs.map(([label, w]) => <Tab key={label} $w={w}>{label}</Tab>)}
            </TabRow>
            <TabRow $gap={1} $front>
                {frontTabs.map(([label, w]) => (
                    <Tab key={label} $w={w} $on={label === "Списки"}>
                        {label === "Списки" ? <FocusMark>{label}</FocusMark> : label}
                    </Tab>
                ))}
            </TabRow>
            <Page>
                <FieldLabel>С<u>п</u>иски:</FieldLabel>
                <FieldLabel><u>Э</u>лементы списка:</FieldLabel>
                <div />
                <ListBox>
                    <ListItems>
                        {lists.map((row, i) => <ListRow key={row} $sel={i === 0}>{row}</ListRow>)}
                    </ListItems>
                    <ListScroll>
                        <ScrollButton $h={16}><Arrow dir="up" color="#8a8878" /></ScrollButton>
                        <ScrollButton $h={16}><Arrow dir="down" color="#8a8878" /></ScrollButton>
                    </ListScroll>
                </ListBox>
                <ListBox>
                    <ListItems />
                    <ListScroll $off>
                        <ScrollButton $h={16}><Arrow dir="up" color="#c8c6b8" /></ScrollButton>
                        <ScrollButton $h={16}><Arrow dir="down" color="#c8c6b8" /></ScrollButton>
                    </ListScroll>
                </ListBox>
                <SideButtons>
                    <Button><span><u>Д</u>обавить</span></Button>
                    <Button $off>Удалить</Button>
                </SideButtons>
                <HintLine>Для разделения элементов списка нажмите клавишу Enter.</HintLine>
                <ImportLabel>И<u>м</u>порт списка из ячеек:</ImportLabel>
                <RefInput>
                    $B$4:$B$21
                    <RefEditIcon />
                </RefInput>
                <Button><span><u>И</u>мпорт</span></Button>
            </Page>
            <DialogFooter>
                <Button $w={74} $h={23} $def>ОК</Button>
                <Button $w={75} $h={23}>Отмена</Button>
            </DialogFooter>
        </DialogBody>
    </Dialog>
);

const Slant = ({ flip }) => (
    <Ico w={8} h={16} vb="0 0 8 16">
        <path d={flip ? "M7.500 0L1.500 15" : "M0.500 0L6.500 15"} stroke="#222" fill="none" />
    </Ico>
);

const ExcelWindow = () => (
    <App>
        <TitleBar>
            <ExcelLogo />
            <TitleText>Microsoft Excel - Табель успеваемости1</TitleText>
            <CaptionButton>
                <Ico s={12} vb="0 0 12 12"><path d="M2 10h6" stroke="#fff" strokeWidth="2" /></Ico>
            </CaptionButton>
            <CaptionButton>
                <Ico s={12} vb="0 0 12 12">
                    <path d="M4.500 3V1.500h6v5H9M1.500 4h6v6h-6z" stroke="#fff" fill="none" />
                </Ico>
            </CaptionButton>
            <CaptionButton $close>
                <Ico s={12} vb="0 0 12 12"><path d="M1 1l10 10M11 1L1 11" stroke="#fff" strokeWidth="2" /></Ico>
            </CaptionButton>
        </TitleBar>
        <MenuBar>
            <DocExcel />
            {menuItems.map((parts, i) => (
                <MenuItem key={i} $first={i === 0}>{renderMenuLabel(parts)}</MenuItem>
            ))}
            <AskBox>
                Введите вопрос
                <ComboArrow><DropArrow /></ComboArrow>
            </AskBox>
            <DocButtons>
                <Ico s={10} vb="0 0 10 10"><path d="M1 8.500h6" stroke="#000" strokeWidth="2" /></Ico>
                <Ico s={11} vb="0 0 11 11">
                    <path d="M3.500 2.500V.500h7v6H8M.500 3.500h7v7h-7z" stroke="#000" fill="none" />
                </Ico>
                <Ico s={10} vb="0 0 10 10"><path d="M1 1l8 8M9 1L1 9" stroke="#000" strokeWidth="1.600" /></Ico>
            </DocButtons>
        </MenuBar>
        <Toolbar />
        <FormulaBar>
            <NameBox>B4</NameBox>
            <NameDrop><DropArrow /></NameDrop>
            <FxCell><FxIcon /></FxCell>
            <FormulaInput>Алексеева</FormulaInput>
        </FormulaBar>
        <SheetArea>
            <SheetClip>
                <SheetGrid />
            </SheetClip>
            <VScroll>
                <ScrollButton $h={16}><Arrow dir="up" color="#555" /></ScrollButton>
                <ScrollThumb />
                <ScrollButton $h={13}><Arrow dir="down" /></ScrollButton>
            </VScroll>
        </SheetArea>
        <SheetBar>
            <NavArrows>
                <Ico w={8} h={9} vb="0 0 8 9"><path d="M1 0v9M7 0v9L2 4.500z" stroke="#000" strokeWidth=".8" /></Ico>
                <Arrow dir="left" />
                <Arrow dir="right" />
                <Ico w={8} h={9} vb="0 0 8 9"><path d="M7 0v9M1 0v9l5-4.500z" stroke="#000" strokeWidth=".8" /></Ico>
            </NavArrows>
            <SheetTab>
                <Slant />
                <SheetTabText $w={84}>Математика</SheetTabText>
                <Slant />
            </SheetTab>
            <SheetTab $ml={-5}>
                <SheetTabText $w={93} $on>Информатика</SheetTabText>
                <Slant flip />
            </SheetTab>
            <HScroll>
                <SplitBar />
                <ScrollButton $w={16} $h={15}><Arrow dir="left" /></ScrollButton>
                <HThumb />
                <Hatch />
                <ScrollButton $w={16} $h={15}><Arrow dir="right" /></ScrollButton>
                <SplitBar />
                <Tool $w={20} />
            </HScroll>
        </SheetBar>
        <StatusBar>
            <StatusText>Готово</StatusText>
            <StatusPanel $w={34} />
            <StatusPanel $w={112} />
            <StatusPanel $w={26} />
            <StatusPanel $w={29} />
            <StatusPanel $w={28}>NUM</StatusPanel>
            <StatusPanel $w={29} />
            <StatusPanel $w={26} />
            <StatusPanel $w={36} />
        </StatusBar>
        <TaskBar>
            <StartButton>
                <WinFlag />
                пуск
            </StartButton>
            <QuickLaunch>
                <IeIcon />
                <OutlookIcon />
                <BoltIcon />
                <QuickMore>»</QuickMore>
            </QuickLaunch>
            <TaskButton $w={158}><FolderIcon />Лекции</TaskButton>
            <TaskButton $w={159} $on><ExcelLogo s={16} />Microsoft Excel - Таб...</TaskButton>
            <TaskButton $w={159}><WordIcon />Табельуспкев. теор...</TaskButton>
            <LangBox>RU</LangBox>
            <Tray>
                <TrayPrinter />
                <TrayNet />
                <TrayCircle />
                <TrayNvidia />
                <TrayPlay />
                <TraySpeaker />
                <Clock>15:07</Clock>
            </Tray>
        </TaskBar>
        <OptionsDialog />
    </App>
);

export default function Root() {
    return (
        <>
            <GlobalStyle />
            <ExcelWindow />
        </>
    );
}
